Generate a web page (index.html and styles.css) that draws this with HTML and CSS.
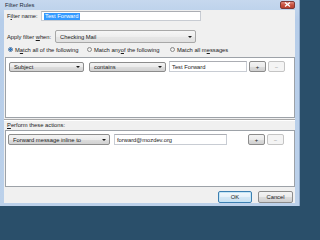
FILE: index.html
```html
<!DOCTYPE html>
<html>
<head>
<meta charset="utf-8">
<link rel="stylesheet" href="styles.css">
</head>
<body>
<div class="window">
  <div class="titlebar">
    <span class="title">Filter Rules</span>
    <span class="close"><svg width="7" height="5" viewBox="0 0 7 5"><path d="M1 0.5 L6 4.5 M6 0.5 L1 4.5" stroke="#ffffff" stroke-width="1.3"/></svg></span>
  </div>
  <div class="content">
    <div class="row name-row">
      <span class="lbl">F<u>i</u>lter name:</span>
      <div class="input name-input"><span class="sel">Test Forward</span></div>
    </div>
    <div class="row when-row">
      <span class="lbl">Apply filter <u>w</u>hen:</span>
      <div class="select when-select"><span>Checking Mail</span><i class="arrow"></i></div>
    </div>
    <div class="radios">
      <span class="radio r1"><i class="dot on"></i>M<u>a</u>tch all of the following</span>
      <span class="radio r2"><i class="dot"></i>Match any <u>o</u>f the following</span>
      <span class="radio r3"><i class="dot"></i>Match all m<u>e</u>ssages</span>
    </div>
    <div class="listbox rules">
      <div class="line">
        <div class="select subj"><span>Subject</span><i class="arrow"></i></div>
        <div class="select cont"><span>contains</span><i class="arrow"></i></div>
        <div class="input val">Test Forward</div>
        <div class="btn pm">+</div>
        <div class="btn pm dis">&minus;</div>
      </div>
    </div>
    <div class="splitter"></div>
    <div class="section-label"><u>P</u>erform these actions:</div>
    <div class="listbox actions">
      <div class="line">
        <div class="select act"><span>Forward message inline to</span><i class="arrow"></i></div>
        <div class="input mail">forward@mozdev.org</div>
        <div class="btn pm">+</div>
        <div class="btn pm dis">&minus;</div>
      </div>
    </div>
    <div class="footer">
      <div class="btn dlg ok">OK</div>
      <div class="btn dlg">Cancel</div>
    </div>
  </div>
</div>
</body>
</html>
```

FILE: styles.css
```css
html, body {
  margin: 0;
  padding: 0;
}
body {
  width: 300px;
  height: 208px;
  overflow: hidden;
  background: #2a4f6a;
  font-family: "Liberation Sans", Arial, sans-serif;
  font-size: 5.8px;
  color: #1a1a1a;
}
u { text-decoration: underline; text-underline-offset: 1px; text-decoration-thickness: 0.5px; }
.window {
  width: 300px;
  height: 206px;
  box-sizing: border-box;
  background: linear-gradient(#c6d8ee, #b6cde9 20px, #bcd1ea);
  padding: 0 4px 3px 4px;
  display: flex;
  flex-direction: column;
  border-right: 1px solid #8ea8c8;
}
.titlebar {
  height: 13px;
  display: flex;
  align-items: center;
  justify-content: space-between;
}
.title {
  padding-left: 1px;
  color: #1e2a38;
  margin-top: -1px;
}
.close {
  width: 15px;
  height: 8px;
  margin-right: 0;
  margin-top: -1px;
  border: 1px solid #7e3a37;
  border-radius: 2px;
  background: linear-gradient(#e08a7f, #c8513f 50%, #b8402f);
  display: flex;
  align-items: center;
  justify-content: center;
  box-sizing: border-box;
}
.content {
  flex: 1;
  background: #f0f0f0;
  display: flex;
  flex-direction: column;
}
.row {
  display: flex;
  align-items: center;
}
.lbl { padding-left: 3px; white-space: nowrap; }
.name-row { margin-top: 1px; height: 10px; }
.name-row .lbl { width: 34px; }
.input {
  box-sizing: border-box;
  background: #fff;
  border: 1px solid #c8ccd3;
  border-top-color: #abadb3;
  display: flex;
  align-items: center;
  padding-left: 2px;
  white-space: nowrap;
  overflow: hidden;
}
.name-input { width: 160px; height: 10px; }
.sel { background: #3399ff; color: #fff; padding: 0 1px; line-height: 7px; }
.when-row { margin-top: 9px; height: 13px; }
.when-row .lbl { width: 48px; }
.select {
  box-sizing: border-box;
  border: 1px solid #8c8c8c;
  border-radius: 2px;
  background: linear-gradient(#f3f3f3, #ebebeb 50%, #dddddd 51%, #d2d2d2);
  display: flex;
  align-items: center;
  padding: 0 3px 0 4px;
  white-space: nowrap;
}
.select span { flex: 1; overflow: hidden; }
.when-select { width: 141px; height: 13px; background: linear-gradient(#f6f6f6, #eeeeee 50%, #e6e6e6 51%, #e1e1e1); border-color: #a8a8a8; }
.arrow {
  width: 0;
  height: 0;
  border-left: 2px solid transparent;
  border-right: 2px solid transparent;
  border-top: 2px solid #1a1a1a;
}
.radios {
  display: flex;
  align-items: center;
  height: 11px;
  margin-top: 1px;
}
.radio { display: flex; align-items: center; white-space: nowrap; }
.dot {
  width: 5px;
  height: 5px;
  box-sizing: border-box;
  border-radius: 50%;
  border: 1px solid #8a8a8a;
  background: linear-gradient(#e4e4e4, #fafafa);
  margin-right: 2px;
}
.dot.on { background: radial-gradient(circle, #3b8bd2 0, #2a6fb8 1px, #dfe8f2 1.5px); border-color: #5a7fa8; }
.r1 { margin-left: 4px; width: 79px; }
.r2 { width: 83px; }
.listbox {
  margin-left: 1px;
  width: 290px;
  box-sizing: border-box;
  border: 1px solid #9da2a8;
  background: #fff;
}
.rules { height: 61px; margin-top: 2px; padding: 3px 0 0 3px; }
.line { display: flex; align-items: center; }
.subj { width: 75px; height: 10px; }
.cont { width: 77px; height: 10px; margin-left: 5px; }
.val { width: 78px; height: 11px; margin-left: 3px; }
.btn {
  box-sizing: border-box;
  border: 1px solid #8c8c8c;
  border-radius: 2px;
  background: linear-gradient(#f3f3f3, #ebebeb 50%, #dddddd 51%, #d0d0d0);
  display: flex;
  align-items: center;
  justify-content: center;
}
.pm { width: 17px; height: 11px; margin-left: 2px; }
.pm.dis { background: #f4f4f4; border-color: #c4c4c4; color: #9a9a9a; }
.splitter {
  margin-top: 1px;
  height: 1px;
  background: #a8a8a8;
  border-bottom: 1px solid #ffffff;
}
.section-label { height: 9px; line-height: 9px; padding-left: 3px; }
.actions { height: 57px; padding: 3px 0 0 2px; }
.act { width: 102px; height: 11px; }
.mail { width: 113px; height: 11px; margin-left: 4px; }
.mail + .pm { margin-left: 21px; }
.footer {
  display: flex;
  justify-content: flex-end;
  margin-top: 4px;
  padding-right: 2px;
}
.dlg { height: 12px; width: 35px; margin-left: 6px; }
.ok { width: 34px; border-color: #3c7fb1; box-shadow: inset 0 0 0 1px #c4e5f6; background: linear-gradient(#f2f8fc, #e5f1fa 50%, #d5e8f5 51%, #c9e1f2); }
```
